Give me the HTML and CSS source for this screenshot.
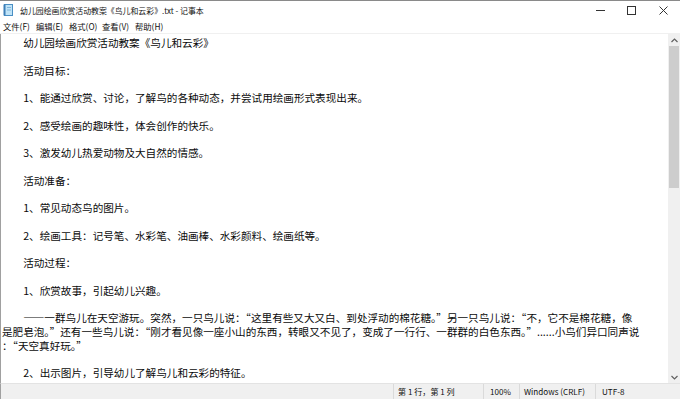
FILE: index.html
```html
<!DOCTYPE html>
<html lang="zh-CN">
<head>
<meta charset="utf-8">
<title>记事本</title>
<link rel="stylesheet" href="styles.css">
</head>
<body>
<div class="window">
  <div class="titlebar">
    <svg class="app-icon" width="10" height="12" viewBox="0 0 10 12">
      <rect x="1.5" y="0.5" width="8" height="11" fill="#bfe3f7" stroke="#4a8fc4"/>
      <rect x="0.5" y="0.5" width="2" height="11" fill="#3d7fb8"/>
      <line x1="4" y1="3.5" x2="8" y2="3.5" stroke="#7fb4da"/>
      <line x1="4" y1="6" x2="8" y2="6" stroke="#7fb4da"/>
    </svg>
    <span class="title">幼儿园绘画欣赏活动教案《鸟儿和云彩》.txt - 记事本</span>
    <div class="controls">
      <svg class="ctl" width="30" height="18" viewBox="0 0 30 18"><line x1="10" y1="9.5" x2="19" y2="9.5" stroke="#333" stroke-width="1"/></svg>
      <svg class="ctl" width="32" height="18" viewBox="0 0 32 18"><rect x="11.5" y="5.5" width="8" height="8" fill="none" stroke="#333" stroke-width="1"/></svg>
      <svg class="ctl" width="32" height="18" viewBox="0 0 32 18"><path d="M11.5 5.5 L19.5 13.5 M19.5 5.5 L11.5 13.5" stroke="#333" stroke-width="1"/></svg>
    </div>
  </div>
  <div class="menubar">
    <span class="menu-item">文件(F)</span>
    <span class="menu-item">编辑(E)</span>
    <span class="menu-item">格式(O)</span>
    <span class="menu-item">查看(V)</span>
    <span class="menu-item">帮助(H)</span>
  </div>
  <div class="main">
    <div class="editor"><div class="text">　　幼儿园绘画欣赏活动教案《鸟儿和云彩》

　　活动目标：

　　1、能通过欣赏、讨论，了解鸟的各种动态，并尝试用绘画形式表现出来。

　　2、感受绘画的趣味性，体会创作的快乐。

　　3、激发幼儿热爱动物及大自然的情感。

　　活动准备：

　　1、常见动态鸟的图片。

　　2、绘画工具：记号笔、水彩笔、油画棒、水彩颜料、绘画纸等。

　　活动过程：

　　1、欣赏故事，引起幼儿兴趣。

　　——一群鸟儿在天空游玩。突然，一只鸟儿说：“这里有些又大又白、到处浮动的棉花糖。”另一只鸟儿说：“不，它不是棉花糖，像
是肥皂泡。”还有一些鸟儿说：“刚才看见像一座小山的东西，转眼又不见了，变成了一行行、一群群的白色东西。”......小鸟们异口同声说
：“天空真好玩。”

　　2、出示图片，引导幼儿了解鸟儿和云彩的特征。</div></div>
    <div class="scrollbar">
      <div class="sb-btn"><svg width="7" height="5" viewBox="0 0 7 5"><path d="M0.5 4 L3.5 1 L6.5 4" fill="none" stroke="#606060" stroke-width="1.2"/></svg></div>
      <div class="sb-track"><div class="sb-thumb"></div></div>
      <div class="sb-btn"><svg width="7" height="5" viewBox="0 0 7 5"><path d="M0.5 1 L3.5 4 L6.5 1" fill="none" stroke="#606060" stroke-width="1.2"/></svg></div>
    </div>
  </div>
  <div class="statusbar">
    <div class="sb-fill"></div>
    <div class="sb-sec sec-pos">第 1 行，第 1 列</div>
    <div class="sb-sec sec-zoom">100%</div>
    <div class="sb-sec sec-eol">Windows (CRLF)</div>
    <div class="sb-sec sec-enc">UTF-8</div>
  </div>
</div>
</body>
</html>
```
FILE: styles.css
```css
* { box-sizing: border-box; }
html, body {
  margin: 0;
  padding: 0;
  width: 680px;
  height: 399px;
  overflow: hidden;
  background: #ffffff;
}
.window {
  width: 680px;
  height: 399px;
  display: flex;
  flex-direction: column;
  font-family: "Noto Sans CJK SC", "Noto Sans", sans-serif;
  color: #000;
}
.titlebar {
  height: 19px;
  border-top: 1px solid #8a8a8a;
  display: flex;
  align-items: center;
  background: #fff;
}
.app-icon {
  margin-left: 3px;
  margin-right: 7px;
  flex: none;
}
.title {
  font-size: 7.9px;
  flex: 1;
  white-space: nowrap;
  color: #111;
}
.controls {
  display: flex;
  align-items: center;
  height: 18px;
}
.ctl { display: block; }
.menubar {
  height: 15px;
  display: flex;
  align-items: center;
  padding-left: 3px;
  border-bottom: 1px solid #f0f0f0;
}
.menu-item {
  font-size: 8.3px;
  width: 33px;
  white-space: nowrap;
  color: #111;
}
.main {
  flex: 1;
  display: flex;
  border-left: 1px solid #a0a0a0;
  min-height: 0;
}
.editor {
  flex: 1;
  overflow: hidden;
  padding: 2px 0 0 1px;
}
.text {
  white-space: pre;
  font-size: 10.6px;
  line-height: 13.75px;
  color: #0a0a0a;
}
.scrollbar {
  width: 12px;
  display: flex;
  flex-direction: column;
  background: #f0f0f0;
}
.sb-btn {
  height: 12px;
  display: flex;
  align-items: center;
  justify-content: center;
}
.sb-track {
  flex: 1;
  padding: 0 1px;
}
.sb-thumb {
  height: 142px;
  background: #cdcdcd;
}
.statusbar {
  height: 16px;
  display: flex;
  align-items: center;
  background: #f0f0f0;
  border-top: 1px solid #e3e3e3;
  border-left: 1px solid #a0a0a0;
  font-size: 8.1px;
  color: #111;
}
.sb-fill { flex: 1; }
.sb-sec {
  height: 100%;
  display: flex;
  align-items: center;
  border-left: 1px solid #dadada;
  white-space: nowrap;
  overflow: hidden;
}
.sec-pos { width: 90px; padding-left: 4px; }
.sec-zoom { width: 36px; padding-left: 6px; }
.sec-eol { width: 76px; padding-left: 4px; }
.sec-enc { width: 85px; padding-left: 6px; }
```
